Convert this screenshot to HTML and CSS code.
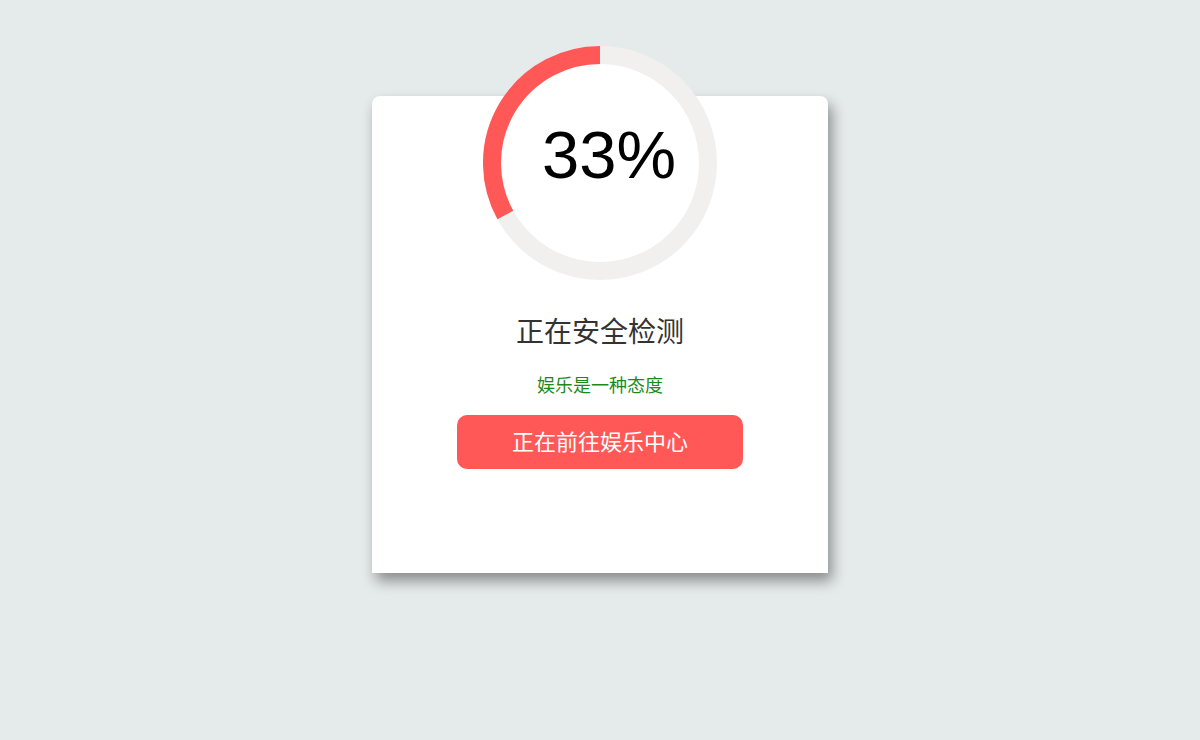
FILE: index.html
```html
<!DOCTYPE html>
<html lang="zh-CN">
<head>
<meta charset="utf-8">
<title>正在安全检测</title>
<link rel="stylesheet" href="styles.css">
</head>
<body>
<div class="card">
  <div class="ring">
    <svg class="ring-svg" width="234" height="234" viewBox="0 0 234 234">
      <circle cx="117" cy="117" r="108" fill="#ffffff" stroke="#f2f0ef" stroke-width="18"/>
      <path d="M117 9 A108 108 0 0 0 22.35 169.03" fill="none" stroke="#ff5857" stroke-width="18"/>
    </svg>
    <div class="ring-text">33%</div>
  </div>
  <div class="title">正在安全检测</div>
  <div class="subtitle">娱乐是一种态度</div>
  <div class="btn">正在前往娱乐中心</div>
</div>
</body>
</html>
```

FILE: styles.css
```css
html, body {
  margin: 0;
  padding: 0;
}
body {
  background: #e5eaea;
  height: 740px;
  overflow: hidden;
  font-family: "Noto Sans CJK SC", "Liberation Sans", sans-serif;
  padding-top: 96px;
  box-sizing: border-box;
}
.card {
  width: 456px;
  height: 477px;
  margin: 0 auto;
  background: #ffffff;
  border-radius: 8px 8px 0 0;
  box-shadow: 4px 8px 14px rgba(0, 0, 0, 0.4);
  display: flex;
  flex-direction: column;
  align-items: center;
}
.ring {
  margin-top: -50px;
  width: 234px;
  height: 234px;
  display: grid;
}
.ring-svg {
  grid-area: 1 / 1;
  display: block;
}
.ring-text {
  grid-area: 1 / 1;
  align-self: center;
  justify-self: center;
  font-family: "Liberation Sans", Arial, sans-serif;
  font-size: 67px;
  line-height: 80px;
  color: #000;
  padding-left: 18px;
  margin-top: -16px;
}
.title {
  margin-top: 30px;
  font-size: 28px;
  line-height: 40px;
  color: #333333;
}
.subtitle {
  margin-top: 22px;
  font-size: 18px;
  line-height: 24px;
  color: #1b8a1b;
}
.btn {
  margin-top: 19px;
  width: 286px;
  height: 54px;
  box-sizing: border-box;
  padding-bottom: 4px;
  border-radius: 10px;
  background: #ff5857;
  color: #ffffff;
  font-size: 22px;
  display: flex;
  align-items: center;
  justify-content: center;
}
```
